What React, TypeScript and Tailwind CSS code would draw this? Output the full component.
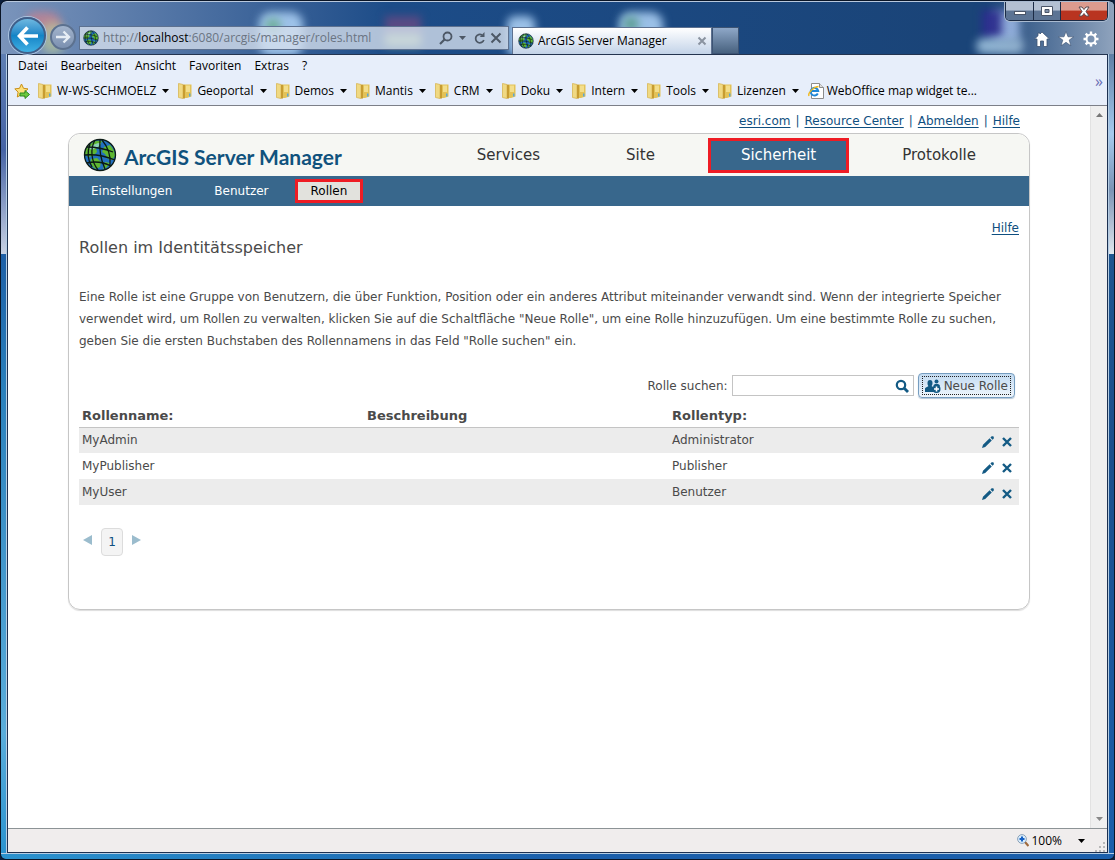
import { useState, type ReactNode } from "react";

const menus = ["Datei", "Bearbeiten", "Ansicht", "Favoriten", "Extras", "?"];

const favorites = [
  "W-WS-SCHMOELZ",
  "Geoportal",
  "Demos",
  "Mantis",
  "CRM",
  "Doku",
  "Intern",
  "Tools",
  "Lizenzen",
];

const mainNav = ["Services", "Site", "Sicherheit", "Protokolle"];
const metaLinks = ["esri.com", "Resource Center", "Abmelden", "Hilfe"];

type Role = { name: string; description: string; type: string };

const roles: Role[] = [
  { name: "MyAdmin", description: "", type: "Administrator" },
  { name: "MyPublisher", description: "", type: "Publisher" },
  { name: "MyUser", description: "", type: "Benutzer" },
];

function GlobeIcon({ className }: { className: string }) {
  return (
    <svg viewBox="0 0 34 34" className={className} aria-hidden="true">
      <circle cx="17" cy="17" r="15.5" fill="#2270c0" />
      <path
        d="M6 7c4-4 9-5 13-4l-2 5-4 2 1 4-4 4-5 1-3-3c0-4 2-7 4-9zM8 21l6-1 4 4-1 5-4 2c-4-2-6-6-5-10zM21 9l6-2c3 3 5 7 5 11l-3 4-4-1-3-5-3-2zM22 24l5 1-4 5-3 1z"
        fill="#5fb832"
      />
      <path d="M5 10c4-3 8-5 13-5l-3 4-6 3z" fill="#9fdcf2" opacity="0.7" />
      <g fill="none" stroke="#0b1a14" strokeWidth="1.3">
        <circle cx="17" cy="17" r="15.5" />
        <path d="M12 2c-5 9-4 21 3 30M17 2c-1 10 1 20 5 29M19 2c6 7 9 15 8 25M7 6c-3 8-3 15 2 23" />
        <path d="M4 9c9 0 18 2 26 5M2 17c10-1 20 1 30 5M4 25c8-2 16-1 24 3" />
      </g>
    </svg>
  );
}

function FolderIcon() {
  return (
    <svg viewBox="0 0 14 16" className="h-4 w-3.5" aria-hidden="true">
      <path d="M6 1.500h7.500v12L9 15H6z" fill="#e3c257" />
      <path d="M8 2.500h4V9H8z" fill="#f3de8c" />
      <path d="M.5.5L5 1.500v14l-4.500-1z" fill="#f0d983" stroke="#d8b654" strokeWidth="0.800" />
      <path d="M5 1.500l2 .5v13.500H5z" fill="#c79c31" />
      <path d="M11 10.500h1.500v3H11z" fill="#5aa7d8" />
    </svg>
  );
}

function FavoriteStarIcon() {
  return (
    <svg viewBox="0 0 16 16" className="size-4" aria-hidden="true">
      <path
        d="M7.500 1l2 4.300 4.500.6-3.300 3.200.8 4.900-4-2.300-4.200 2.300.8-4.900L.8 5.900l4.700-.6z"
        fill="#fde07a"
        stroke="#c98f17"
      />
      <path
        d="M6 10h5V7.500l4.500 4-4.500 4V13H6z"
        fill="#6cc83e"
        stroke="#2b8a22"
      />
    </svg>
  );
}

function IePageIcon() {
  return (
    <svg viewBox="0 0 16 16" className="size-4" aria-hidden="true">
      <path d="M3.500.5h8l4 4v11h-12z" fill="#fff" stroke="#8c8c8c" />
      <path d="M11.500.5v4h4" fill="#ddd" stroke="#8c8c8c" />
      <path
        d="M9.800 10.500a3.800 3.800 0 1 1 .4-2.500H3.500"
        fill="none"
        stroke="#1f87d8"
        strokeWidth="2"
      />
      <path
        d="M1 13c-1.500-3 5-9.500 9.500-9.500"
        fill="none"
        stroke="#f2b91c"
        strokeWidth="1.400"
      />
    </svg>
  );
}

function Caret({ className = "fill-black" }: { className?: string }) {
  return (
    <svg viewBox="0 0 7 4" className={`h-1 w-[7px] ${className}`} aria-hidden="true">
      <path d="M0 0h7L3.500 4z" />
    </svg>
  );
}

// Desktop icons shining through the glass title bar
function GlassBlobs() {
  return (
    <div className="pointer-events-none absolute inset-0 overflow-hidden" aria-hidden="true">
      <div className="absolute top-2.5 left-6 h-6 w-9 rounded-full bg-[#b58497] blur-[4px]" />
      <div className="absolute top-5 left-10 h-8 w-6 rounded-full bg-[#b9c79a]/70 blur-[4px]" />
      <div className="absolute top-2.5 left-[258px] h-11 w-11 rounded-xl bg-[#a9cdf2]/90 blur-[4px]" />
      <div className="absolute top-4 left-[264px] size-4 rounded-full bg-[#6fae9b] blur-[4px]" />
      <div className="absolute top-3.5 left-[384px] h-5 w-9 bg-[#5a4a84] blur-[4px]" />
      <div className="absolute top-8 left-[384px] h-3 w-9 bg-[#9db98b] blur-[4px]" />
      <div className="absolute top-3.5 left-[506px] h-10 w-7 rounded-lg bg-[#a9cdf2]/90 blur-[4px]" />
      <div className="absolute top-2.5 left-[618px] h-11 w-11 rounded-xl bg-[#a9cdf2]/90 blur-[4px]" />
      <div className="absolute top-3.5 left-[622px] size-4 rounded-full bg-[#5f9f98] blur-[4px]" />
      <div className="absolute top-2.5 right-[94px] h-8 w-7 rounded-lg bg-[#8faee0] blur-[4px]" />
      <div className="absolute top-2 right-[112px] h-7 w-5 bg-[#2b2d8e] blur-[4px]" />
      <div className="absolute top-9 right-[90px] h-4 w-12 rounded-full bg-[#8fb3d2] blur-[4px]" />
    </div>
  );
}

function WindowButtons() {
  return (
    <div className="flex h-[19px] overflow-hidden rounded-b-[5px] border border-t-0 border-[#1b2b45] shadow-[0_0_0_1px_#a9bad0]">
      <button
        aria-label="Minimieren"
        className="flex w-7 items-center justify-center border-r border-[#1b2b45] bg-linear-to-b from-[#b3c0d2] from-45% to-[#5c7494] to-50%"
      >
        <span className="mt-1 h-1 w-3 border border-[#4a5568] bg-white" />
      </button>
      <button
        aria-label="Maximieren"
        className="flex w-[27px] items-center justify-center border-r border-[#1b2b45] bg-linear-to-b from-[#b3c0d2] from-45% to-[#5c7494] to-50%"
      >
        <svg viewBox="0 0 12 10" className="h-2.5 w-3" aria-hidden="true">
          <path d="M.5.5h11v9H.5z" fill="#fff" stroke="#4a5568" />
          <path d="M4 3.500h4v3H4z" fill="#8091aa" stroke="#4a5568" />
        </svg>
      </button>
      <button
        aria-label="Schließen"
        className="flex w-[46px] items-center justify-center bg-linear-to-b from-[#dc9b8e] from-45% to-[#b93420] to-50%"
      >
        <svg viewBox="0 0 12 11" className="h-[11px] w-3" aria-hidden="true">
          <path d="M1 1h3l2 2.500L8 1h3L8 5.500l3 4.500H8L6 7.500 4 10H1l3-4.500z" fill="#fff" stroke="#5a4a50" />
        </svg>
      </button>
    </div>
  );
}

function TitleBar() {
  return (
    <header className="relative flex h-[53px] rounded-t-md border-t border-[#b8c8dd] bg-linear-to-r from-[#7a94bb] via-[#1c4c88] via-35% to-[#1a4478] to-85% pl-2">
      <GlassBlobs />
      {/* glare in the right corner */}
      <div className="pointer-events-none absolute inset-y-0 right-0 w-32 bg-linear-to-r from-transparent to-[#8fa3bd]" aria-hidden="true" />
      <div className="relative flex min-w-0 flex-1 items-end">
        <button
          aria-label="Zurück"
          className="z-10 flex size-[37px] shrink-0 items-center justify-center rounded-full border-2 border-[#3f5f8a] bg-linear-to-b from-[#6db8e0] via-[#1384c6] via-50% to-[#3fb0e4] ring-1 ring-[#a9c3e0]"
        >
          <svg viewBox="0 0 22 20" className="h-5 w-[22px]" aria-hidden="true">
            <path d="M10.500 1.500L2.500 10l8 8.500M3 10h18" fill="none" stroke="#fff" strokeWidth="3.600" />
          </svg>
        </button>
        <button
          aria-label="Vorwärts"
          className="mb-1 ml-1 flex size-[26px] shrink-0 items-center justify-center rounded-full border-2 border-[#5c718f] bg-linear-to-b from-[#a3b4cc] to-[#7b90b0]"
        >
          <svg viewBox="0 0 16 14" className="h-3.5 w-4" aria-hidden="true">
            <path d="M8.500 1.500L14 7l-5.500 5.500M1 7h12" fill="none" stroke="#e6edf5" strokeWidth="2.400" />
          </svg>
        </button>
        <div className="mb-1 ml-[3px] flex h-6 max-w-[430px] min-w-0 flex-1 items-center border border-[#5d7190] bg-[#d5dfec]/80 pr-1.5 pl-[3px]">
          <GlobeIcon className="size-4 shrink-0" />
          <span className="ml-1 flex-1 truncate text-[12px] text-[#6a7482]">
            http://<span className="text-black">localhost</span>:6080/arcgis/manager/roles.html
          </span>
          <button aria-label="Suchen">
            <svg viewBox="0 0 14 14" className="size-3.5" fill="none" stroke="#4d5866" strokeWidth="1.800" aria-hidden="true">
              <circle cx="8.500" cy="5.500" r="4" />
              <path d="M5.500 8.500L1 13" strokeWidth="2.200" />
            </svg>
          </button>
          <button aria-label="Suchoptionen" className="ml-1.5">
            <Caret className="fill-[#4d5866]" />
          </button>
          <button aria-label="Aktualisieren" className="ml-2">
            <svg viewBox="0 0 12 14" className="h-3.5 w-3" aria-hidden="true">
              <path d="M9.800 9a4.200 4.200 0 1 1-1.800-5" fill="none" stroke="#4d5866" strokeWidth="1.800" />
              <path d="M10.500 1v5H5.800z" fill="#4d5866" />
            </svg>
          </button>
          <button aria-label="Stopp" className="ml-1">
            <svg viewBox="0 0 12 12" className="size-3" aria-hidden="true">
              <path d="M1.500 1.500l9 9M10.500 1.500l-9 9" stroke="#4d5866" strokeWidth="2" />
            </svg>
          </button>
        </div>
        <div className="ml-[3px] flex h-[27px] w-[200px] shrink-0 items-center border border-b-0 border-[#5d7190] bg-linear-to-b from-white to-[#c3d3e8] pr-1 pl-[5px]">
          <GlobeIcon className="size-4" />
          <span className="ml-1 flex-1 truncate text-[12px]">ArcGIS Server Manager</span>
          <button aria-label="Registerkarte schließen">
            <svg viewBox="0 0 10 10" className="size-2.5" aria-hidden="true">
              <path d="M1.500 1.500l7 7M8.500 1.500l-7 7" stroke="#8a93a0" strokeWidth="2" />
            </svg>
          </button>
        </div>
        <button
          aria-label="Neue Registerkarte"
          className="h-[27px] w-[27px] shrink-0 border border-[#3d5474] bg-linear-to-b from-[#8fa8c8] to-[#48627f]"
        />
      </div>
      <div className="relative flex flex-col items-end justify-between pr-1.5 pb-1.5">
        <WindowButtons />
        <div className="flex items-center gap-[7px] pr-2">
          <button aria-label="Startseite">
            <svg viewBox="0 0 16 16" className="size-4" aria-hidden="true">
              <path d="M8 1l7.500 7H13v7.500H9.500V10h-3v5.500H3V8H.5L4 4.800V2h2v1z" fill="#fff" stroke="#3d5372" strokeWidth="0.800" />
            </svg>
          </button>
          <button aria-label="Favoriten">
            <svg viewBox="0 0 18 18" className="size-[18px]" aria-hidden="true">
              <path d="M9 1.500l2 5.300h5.700L12.200 10l1.700 5.800L9 12.300l-4.900 3.500L5.800 10 1.300 6.800H7z" fill="#fff" stroke="#3d5372" strokeWidth="0.600" />
            </svg>
          </button>
          <button aria-label="Extras">
            <svg viewBox="0 0 18 18" className="size-[18px]" fill="none" stroke="#fff" aria-hidden="true">
              <circle cx="9" cy="9" r="4.500" strokeWidth="2" />
              <path d="M9 1.500v3M9 13.500v3M1.500 9h3M13.500 9h3M3.700 3.700l2 2M12.300 12.300l2 2M3.700 14.300l2-2M12.300 5.700l2-2" strokeWidth="2.400" />
            </svg>
          </button>
        </div>
      </div>
    </header>
  );
}

function MenuBars() {
  return (
    <div className="border-t border-b border-t-[#24344f] border-b-[#7c7f88] bg-[#e7eefa] text-[12px] leading-4">
      <nav className="flex h-[22px] items-center gap-[13px] pl-2.5">
        {menus.map((m) => (
          <button key={m}>{m}</button>
        ))}
      </nav>
      <div className="flex h-[28px] items-center pl-1.5">
        <button aria-label="Zu Favoriten hinzufügen" className="mr-2">
          <FavoriteStarIcon />
        </button>
        <div className="flex min-w-0 flex-1 items-center gap-[9px] overflow-hidden whitespace-nowrap">
          {favorites.map((f) => (
            <button key={f} className="flex items-center">
              <FolderIcon />
              <span className="mr-1.5 ml-[5px]">{f}</span>
              <Caret />
            </button>
          ))}
          <button className="flex items-center gap-[3px]">
            <IePageIcon />
            WebOffice map widget te...
          </button>
        </div>
        <button aria-label="Weitere Favoriten" className="mr-1 mb-5 text-[16px] text-[#6a6fb5]">
          »
        </button>
      </div>
    </div>
  );
}

function TextLink({ children }: { children: ReactNode }) {
  return (
    <a href="#" className="text-[#0f4f80] underline underline-offset-2">
      {children}
    </a>
  );
}

function PanelHeader() {
  return (
    <>
      <div className="flex h-[42px] items-center rounded-t-xl bg-[#f6f7f3] pr-2.5 pl-3.5">
        <GlobeIcon className="size-[34px] shrink-0" />
        <span className="ml-[7px] pt-1 font-[Lato] text-[21px] font-bold whitespace-nowrap text-[#10527d]">
          ArcGIS Server Manager
        </span>
        <nav className="ml-auto flex items-center text-[15px] text-[#333]">
          {mainNav.map((item) =>
            item === "Sicherheit" ? (
              <a
                key={item}
                href="#"
                className="mx-2.5 flex h-[35px] items-center border-[3px] border-[#ee1c24] bg-[#38678c] px-[30px] text-white"
              >
                {item}
              </a>
            ) : (
              <a key={item} href="#" className="mx-2.5 px-[33px]">
                {item}
              </a>
            ),
          )}
        </nav>
      </div>
      <nav className="flex h-[30px] items-center bg-[#38678c] pl-[22px] text-[12px] text-white">
        <a href="#">Einstellungen</a>
        <a href="#" className="ml-[42px]">Benutzer</a>
        <a
          href="#"
          className="ml-[26px] flex h-6 items-center border-[3px] border-[#ee1c24] bg-[#e2e2dd] px-[13px] text-black"
        >
          Rollen
        </a>
      </nav>
    </>
  );
}

function RolesTable() {
  return (
    <table className="w-full table-fixed text-left">
      <thead>
        <tr className="h-[27px] border-b border-[#c4c4c4] text-[13px] font-bold">
          <th className="w-[285px] pt-1 pl-[3px]">Rollenname:</th>
          <th className="w-[305px] pt-1 pl-[3px]">Beschreibung</th>
          <th className="pt-1 pl-[3px]">Rollentyp:</th>
          <th className="w-12" aria-label="Aktionen" />
        </tr>
      </thead>
      <tbody>
        {roles.map((role) => (
          <tr key={role.name} className="h-[26px] odd:bg-[#ececec]">
            <td className="pl-[3px]">{role.name}</td>
            <td className="pl-[3px]">{role.description}</td>
            <td className="pl-[3px]">{role.type}</td>
            <td>
              <div className="flex items-center justify-end gap-2 pt-1 pr-[7px]">
                <button aria-label={`${role.name} bearbeiten`}>
                  <svg viewBox="0 0 12 12" className="size-3" fill="#135a84" aria-hidden="true">
                    <path d="M0 12l1-3.200L7.600 2.200l2.200 2.200L3.200 11zM8.400 1.500L9.700.3h1.500l.6.700v1.500l-1.300 1.300z" />
                  </svg>
                </button>
                <button aria-label={`${role.name} löschen`}>
                  <svg viewBox="0 0 10 10" className="size-2.5" aria-hidden="true">
                    <path d="M1 1l8 8M9 1L1 9" stroke="#135a84" strokeWidth="2.400" />
                  </svg>
                </button>
              </div>
            </td>
          </tr>
        ))}
      </tbody>
    </table>
  );
}

function RolesPanel() {
  const [search, setSearch] = useState("");
  return (
    <section className="rounded-xl border border-[#c6c6c6] shadow-[0_1px_1px_#ddd]">
      <PanelHeader />
      <div className="px-2.5 pt-3 pb-[53px]">
        <div className="flex h-5 items-center justify-end">
          <TextLink>Hilfe</TextLink>
        </div>
        <h1 className="text-[16px] leading-5">Rollen im Identitätsspeicher</h1>
        <p className="mt-7 leading-[22px]">
          Eine Rolle ist eine Gruppe von Benutzern, die über Funktion, Position
          oder ein anderes Attribut miteinander verwandt sind. Wenn der
          integrierte Speicher verwendet wird, um Rollen zu verwalten, klicken
          Sie auf die Schaltfläche "Neue Rolle", um eine Rolle hinzuzufügen. Um
          eine bestimmte Rolle zu suchen, geben Sie die ersten Buchstaben des
          Rollennamens in das Feld "Rolle suchen" ein.
        </p>
        <div className="mt-[21px] flex items-center justify-end pr-1">
          <label htmlFor="role-search">Rolle suchen:</label>
          <div className="ml-1 flex h-[21px] w-[182px] items-center border border-[#c4c4c4] pr-1">
            <input
              id="role-search"
              value={search}
              onChange={(e) => setSearch(e.target.value)}
              className="min-w-0 flex-1 px-1 outline-none"
            />
            <button aria-label="Rolle suchen">
              <svg viewBox="0 0 14 14" className="size-3.5" fill="none" stroke="#135a84" aria-hidden="true">
                <circle cx="6" cy="6" r="4.200" strokeWidth="2.200" />
                <path d="M9 9l4 4" strokeWidth="2.800" />
              </svg>
            </button>
          </div>
          <button className="ml-1 flex h-[25px] items-center rounded-[4px] border border-[#769dc0] bg-linear-to-b from-[#c3dbf1] to-[#eef5fc] p-[3px] shadow-[0_1px_1px_#b5c5d5]">
            <span className="flex h-[19px] items-center gap-[3px] border border-dotted border-[#222] px-0.5 whitespace-nowrap">
              <svg viewBox="0 0 16 14" className="h-3.5 w-4" aria-hidden="true">
                <g fill="#135a84">
                  <path d="M2.500 4a2.500 3 0 1 1 5 0c0 2-.6 2.600-1 3l2.500 1.500V13H0V9.500C.5 8.300 2 8 3.500 7 3 6.600 2.500 6 2.500 4z" />
                  <circle cx="11.500" cy="2.500" r="2" />
                  <path d="M8.500 7c0-1.500 1-2 3-2s3.500.5 3.500 2.500H9z" />
                  <circle cx="11.500" cy="10" r="4" />
                </g>
                <path d="M11.500 7.500v5M9 10h5" stroke="#fff" strokeWidth="1.600" />
              </svg>
              Neue Rolle
            </span>
          </button>
        </div>
        <div className="mt-0.5">
          <RolesTable />
        </div>
        <div className="mt-[23px] flex items-center pl-1">
          <button aria-label="Vorherige Seite" className="mb-1">
            <svg viewBox="0 0 9 10" className="h-2.5 w-[9px] fill-[#9bbccd]" aria-hidden="true">
              <path d="M9 0v10L0 5z" />
            </svg>
          </button>
          <button className="mx-[9px] h-7 w-[22px] rounded-[4px] border border-[#dcdcdc] bg-[#f4f4f4] text-[#0f4f80]">
            1
          </button>
          <button aria-label="Nächste Seite" className="mb-1">
            <svg viewBox="0 0 9 10" className="h-2.5 w-[9px] fill-[#9bbccd]" aria-hidden="true">
              <path d="M0 0l9 5-9 5z" />
            </svg>
          </button>
        </div>
      </div>
    </section>
  );
}

function ScrollBar() {
  return (
    <div className="flex w-[17px] shrink-0 flex-col items-center justify-between border-l border-[#e2e2e2] bg-[#efefef] py-[7px]">
      <svg viewBox="0 0 7 4" className="h-1 w-[7px] fill-[#777]" aria-hidden="true">
        <path d="M0 4h7L3.500 0z" />
      </svg>
      <Caret className="fill-[#888]" />
    </div>
  );
}

function StatusBar() {
  return (
    <footer className="flex h-6 items-center justify-end border-t border-[#8c9396] bg-[#f0eded] text-[12px]">
      <svg viewBox="0 0 12 13" className="mr-0.5 h-[13px] w-3" aria-hidden="true">
        <path d="M8 8l3.500 4" stroke="#a06a3c" strokeWidth="2.200" />
        <circle cx="5" cy="5" r="4.400" fill="#d9ecfb" stroke="#8aa0b8" />
        <path d="M5 2.500v5M2.500 5h5" stroke="#1560c4" strokeWidth="2" />
      </svg>
      <button className="flex items-center gap-4">
        100%
        <Caret />
      </button>
      <svg viewBox="0 0 10 10" className="mt-3 mr-0.5 ml-2.5 size-2.5 fill-[#b8b8b8]" aria-hidden="true">
        <path d="M8 0h2v2H8zM4 4h2v2H4zM8 4h2v2H8zM0 8h2v2H0zM4 8h2v2H4zM8 8h2v2H8z" />
      </svg>
    </footer>
  );
}

export default function App() {
  return (
    <div className="flex min-h-screen flex-col bg-[#0b1f3d] font-['Open_Sans',sans-serif] text-black">
      <div className="flex flex-1 flex-col overflow-hidden rounded-md border border-[#0a1526]">
        <TitleBar />
        <div className="flex flex-1">
          <div className="w-1.5 border-r border-[#b4cde4] bg-[linear-gradient(to_bottom,#5f7fb3,#4563a5_12%,#c8d2e4_25%,#1d5fa6_25%,#2a80bc_42%,#5aaddb_85%,#2b93cf)]" />
          <div className="flex min-w-0 flex-1 flex-col border border-t-0 border-[#1c3050]">
            <MenuBars />
            <div className="flex flex-1 bg-white">
              <main className="min-w-0 flex-1 font-['DejaVu_Sans',sans-serif] text-[12px] text-[#4a4a4a]">
                <div className="mx-auto w-full max-w-[962px]">
                  <div className="flex h-[27px] items-center justify-end pt-0.5 pr-2.5">
                    {metaLinks.map((l, i) => (
                      <span key={l}>
                        {i > 0 && <span className="mx-[5px] text-[#0f4f80]">|</span>}
                        <TextLink>{l}</TextLink>
                      </span>
                    ))}
                  </div>
                  <RolesPanel />
                </div>
              </main>
              <ScrollBar />
            </div>
            <StatusBar />
          </div>
          <div className="w-1.5 border-l border-[#b4cde4] bg-[linear-gradient(to_bottom,#5f7fa5,#a5caee_10%,#7b94b5_17%,#dfe6ee_25%,#1d5590_25%,#1b4f8c_50%,#1b5fab)]" />
        </div>
        <div className="h-1.5 border-t border-[#b4cde4] bg-linear-to-r from-[#2b93cf] to-[#1b5fab] to-50%" />
      </div>
    </div>
  );
}
